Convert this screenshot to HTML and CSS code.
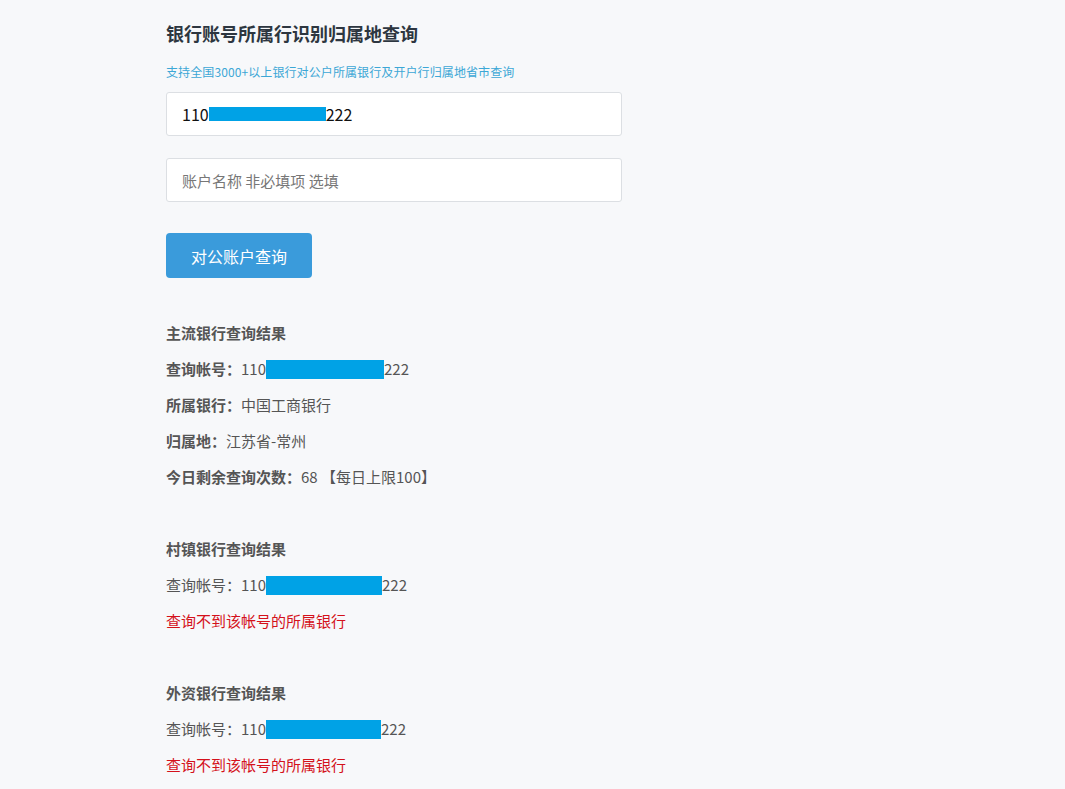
FILE: index.html
```html
<!DOCTYPE html>
<html lang="zh-CN">
<head>
<meta charset="utf-8">
<title>银行账号所属行识别归属地查询</title>
<link rel="stylesheet" href="styles.css">
</head>
<body>
<div class="page">
  <h1 class="title">银行账号所属行识别归属地查询</h1>
  <p class="subtitle">支持全国3000+以上银行对公户所属银行及开户行归属地省市查询</p>
  <div class="field"><span class="val">110</span><span class="mask mask-input"></span><span class="val">222</span></div>
  <div class="field"><span class="placeholder">账户名称 非必填项 选填</span></div>
  <button class="btn" type="button">对公账户查询</button>

  <div class="result">
    <div class="row head">主流银行查询结果</div>
    <div class="row"><b>查询帐号：</b>110<span class="mask mask-a"></span>222</div>
    <div class="row"><b>所属银行：</b>中国工商银行</div>
    <div class="row"><b>归属地：</b>江苏省-常州</div>
    <div class="row"><b>今日剩余查询次数：</b>68 【每日上限100】</div>
  </div>

  <div class="result">
    <div class="row head">村镇银行查询结果</div>
    <div class="row">查询帐号：110<span class="mask mask-b"></span>222</div>
    <div class="row err">查询不到该帐号的所属银行</div>
  </div>

  <div class="result">
    <div class="row head">外资银行查询结果</div>
    <div class="row">查询帐号：110<span class="mask mask-c"></span>222</div>
    <div class="row err">查询不到该帐号的所属银行</div>
  </div>
</div>
</body>
</html>
```

FILE: styles.css
```css
html, body {
  margin: 0;
  padding: 0;
  background: #f7f8fa;
}
body {
  font-family: "Noto Sans CJK SC", "Noto Sans", sans-serif;
  color: #555;
}
.page {
  width: 456px;
  padding: 20px 0 0 166px;
}
.title {
  margin: 0;
  font-size: 18px;
  line-height: 27px;
  font-weight: bold;
  color: #2d3640;
}
.subtitle {
  margin: 16px 0 11px;
  font-size: 12px;
  line-height: 18px;
  letter-spacing: 0.1px;
  color: #3ca7d6;
}
.field {
  box-sizing: border-box;
  height: 44px;
  background: #fff;
  border: 1px solid #dcdfe3;
  border-radius: 3px;
  padding: 0 15px;
  display: flex;
  align-items: center;
  margin-bottom: 22px;
}
.val {
  font-size: 16px;
  color: #111;
}
.placeholder {
  font-size: 15px;
  color: #777;
}
.mask {
  display: inline-block;
  background: #00a2e6;
  vertical-align: middle;
}
.mask-input {
  width: 117px;
  height: 14px;
}
.btn {
  margin-top: 31px;
  width: 146px;
  height: 45px;
  border: none;
  border-radius: 4px;
  background: #3a9bdb;
  color: #fff;
  font-family: inherit;
  font-size: 16px;
  padding: 0;
  display: block;
}
.result {
  margin-top: 37px;
}
.result + .result {
  margin-top: 36px;
}
.row {
  font-size: 15px;
  line-height: 36px;
  height: 36px;
  color: #555;
}
.row b {
  font-weight: bold;
}
.head {
  font-weight: bold;
}
.err {
  color: #d4111b;
}
.mask-a {
  width: 118px;
  height: 19px;
  margin-top: -3px;
}
.mask-b {
  width: 116px;
  height: 19px;
  margin-top: -3px;
}
.mask-c {
  width: 115px;
  height: 19px;
  margin-top: -3px;
}
```
